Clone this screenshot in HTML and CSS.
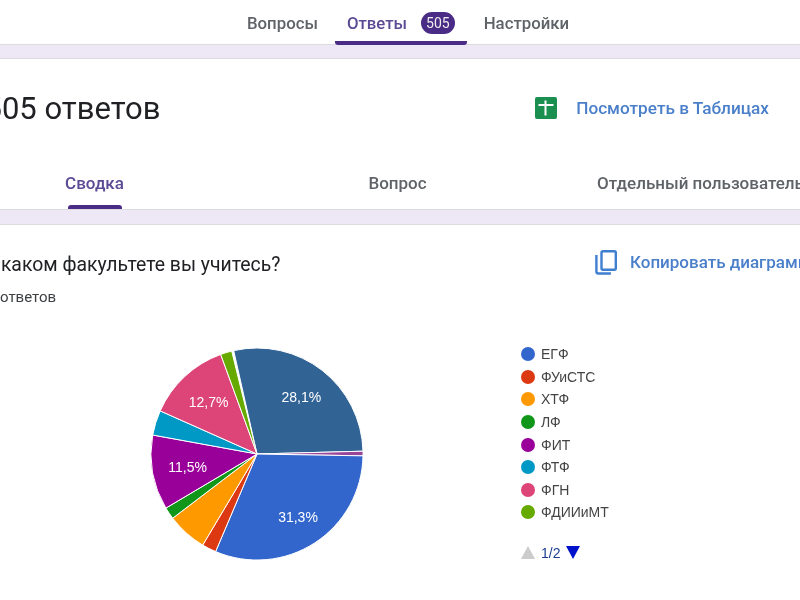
FILE: index.html
```html
<!DOCTYPE html>
<html lang="ru">
<head>
    <meta charset="UTF-8">
    <title>Ответы</title>
    <link rel="stylesheet" href="styles.css">
</head>
<body>

    <nav class="topnav">
        <a class="toptab">Вопросы</a>
        <a class="toptab active">Ответы <span class="badge">505</span></a>
        <a class="toptab">Настройки</a>
    </nav>

    <div class="band band-top"></div>

    <section class="card head-card">
        <div class="head-row">
            <h1 class="title">505 ответов</h1>
            <a class="link sheets-link">
                <svg class="sheets-icon" viewBox="0 0 22 22">
                    <rect width="22" height="22" rx="2" fill="#1a8f50"/>
                    <path d="M3.5 7h15v2h-15zM9.5 3.5h2v15h-2z" fill="#fff"/>
                </svg>
                Посмотреть в Таблицах
            </a>
        </div>
        <div class="subtabs">
            <a class="subtab active"><span>Сводка</span></a>
            <a class="subtab"><span>Вопрос</span></a>
            <a class="subtab"><span>Отдельный пользователь</span></a>
        </div>
    </section>

    <div class="band band-mid"></div>

    <section class="card chart-card">
        <div class="question-row">
            <h2 class="question">В каком факультете вы учитесь?</h2>
            <a class="link copy-link">
                <svg class="copy-icon" viewBox="0 0 22 25" fill="none" stroke="#3f7fd0" stroke-width="2.4">
                    <rect x="6.5" y="1.2" width="14.3" height="18.5" rx="1.5"/>
                    <path d="M1.4 5v16.5a2 2 0 0 0 2 2h12.5"/>
                </svg>
                Копировать диаграмму
            </a>
        </div>
        <p class="count">505 ответов</p>

        <div class="chart">
            <svg class="pie" viewBox="-107 -107 214 214">
                <g stroke="#fff" stroke-width="1">
                    <path d="M0 0L-23.3 -103.4A106 106 0 0 1 106 -2.8Z" fill="#316395"/>
                    <path d="M0 0L106 -2.8A106 106 0 0 1 106 1.85Z" fill="#994499"/>
                    <path d="M0 0L106 1.85A106 106 0 0 1 -41.4 97.6Z" fill="#3366cc"/>
                    <path d="M0 0L-41.4 97.6A106 106 0 0 1 -54.3 91.1Z" fill="#dc3912"/>
                    <path d="M0 0L-54.3 91.1A106 106 0 0 1 -84.3 64.2Z" fill="#ff9900"/>
                    <path d="M0 0L-84.3 64.2A106 106 0 0 1 -91.1 54.1Z" fill="#109618"/>
                    <path d="M0 0L-91.1 54.1A106 106 0 0 1 -104.3 -19Z" fill="#990099"/>
                    <path d="M0 0L-104.3 -19A106 106 0 0 1 -96.8 -43.1Z" fill="#0099c6"/>
                    <path d="M0 0L-96.8 -43.1A106 106 0 0 1 -36.3 -99.6Z" fill="#dd4477"/>
                    <path d="M0 0L-36.3 -99.6A106 106 0 0 1 -25.3 -102.9Z" fill="#66aa00"/>
                </g>
                <g class="pie-labels">
                    <text x="44.3" y="-52">28,1%</text>
                    <text x="41" y="68">31,3%</text>
                    <text x="-48.4" y="-47">12,7%</text>
                    <text x="-69.4" y="18">11,5%</text>
                </g>
            </svg>

            <div class="legend">
                <ul class="legend-list">
                    <li><i class="dot dot-egf"></i>ЕГФ</li>
                    <li><i class="dot dot-fuistc"></i>ФУиСТС</li>
                    <li><i class="dot dot-htf"></i>ХТФ</li>
                    <li><i class="dot dot-lf"></i>ЛФ</li>
                    <li><i class="dot dot-fit"></i>ФИТ</li>
                    <li><i class="dot dot-ftf"></i>ФТФ</li>
                    <li><i class="dot dot-fgn"></i>ФГН</li>
                    <li><i class="dot dot-fdi"></i>ФДИИиМТ</li>
                </ul>
                <div class="pager">
                    <i class="arrow arrow-up"></i>
                    <span>1/2</span>
                    <i class="arrow arrow-down"></i>
                </div>
            </div>
        </div>
    </section>

</body>
</html>
```

FILE: styles.css
```css
html, body {
    height: 100%;
}

body {
    margin: 0;
    overflow: hidden;
    background-color: #fff;
    font-family: Roboto, Arial, sans-serif;
    color: #3c4043;
    filter: blur(0.4px);
}

.topnav {
    display: flex;
    gap: 5px;
    height: 44px;
    padding-left: 235px;
}

.toptab {
    display: flex;
    align-items: center;
    gap: 14px;
    padding: 4px 12px 0;
    margin-bottom: -1px;
    font-size: 16.8px;
    font-weight: 500;
    color: #5f6368;
    border-bottom: 4px solid transparent;
    border-radius: 0 0 2px 2px;
    box-sizing: border-box;
    height: 45px;
}

.toptab.active {
    color: #5b4a94;
    border-bottom-color: #4a2c86;
    border-radius: 3px;
}

.badge {
    padding: 3px 5px;
    border-radius: 12px;
    background-color: #4a2c86;
    color: #eee;
    font-size: 14px;
    font-weight: 400;
}

.band {
    background-color: #ede7f6;
    border-top: 1px solid #dadce0;
    border-bottom: 1px solid #dadce0;
    box-sizing: border-box;
}

.band-top {
    height: 15px;
}

.band-mid {
    height: 16px;
}

.card {
    margin-left: -57px;
    width: 909px;
}

.head-card {
    height: 150px;
}

.head-row {
    display: flex;
    align-items: center;
    justify-content: space-between;
    height: 98px;
    padding-left: 41.5px;
    padding-right: 83px;
}

.title {
    margin: 0;
    font-size: 31px;
    font-weight: 400;
    color: #202124;
}

.link {
    display: flex;
    align-items: center;
    font-size: 17.2px;
    font-weight: 500;
    color: #4a7fc9;
}

.sheets-icon {
    width: 22px;
    height: 22px;
    margin-right: 19px;
}

.subtabs {
    display: grid;
    grid-template-columns: repeat(3, 303px);
    height: 52px;
}

.subtab {
    display: flex;
    justify-content: center;
    padding-top: 16px;
    height: 52px;
    box-sizing: border-box;
    font-size: 17px;
    font-weight: 500;
    color: #5f6368;
}

.subtab.active {
    color: #5b4a94;
    position: relative;
}

.subtab.active::after {
    content: "";
    position: absolute;
    bottom: 0;
    left: 125px;
    width: 54px;
    height: 4px;
    border-radius: 3px 3px 0 0;
    background-color: #4a2c86;
}

.chart-card {
    padding-top: 26px;
    padding-left: 41px;
    box-sizing: border-box;
}

.question-row {
    display: flex;
    align-items: center;
    justify-content: space-between;
    height: 26px;
}

.question {
    margin: 0;
    font-size: 19.4px;
    font-weight: 400;
    color: #202124;
}

.copy-link {
    width: 257px;
    margin-top: -4px;
    font-size: 17px;
    white-space: nowrap;
}

.copy-icon {
    width: 22px;
    height: 25px;
    margin-right: 13px;
}

.count {
    margin: 11px 0 0 -13px;
    font-size: 15px;
    color: #3c4043;
}

.chart {
    display: flex;
    margin-top: 41px;
    padding-left: 166px;
}

.pie {
    width: 214px;
    height: 214px;
}

.pie-labels text {
    fill: #fff;
    font-family: "Liberation Sans", Arial, sans-serif;
    font-size: 14px;
    text-anchor: middle;
}

.legend {
    margin-left: 157px;
    margin-top: -4px;
    font-family: "Liberation Sans", Arial, sans-serif;
    font-size: 14px;
    color: #444;
}

.legend-list {
    margin: 0;
    padding: 0;
    list-style: none;
}

.legend-list li {
    display: flex;
    align-items: center;
    gap: 6px;
    height: 22.6px;
}

.dot {
    width: 14px;
    height: 14px;
    border-radius: 50%;
}

.dot-egf { background-color: #3366cc; }
.dot-fuistc { background-color: #dc3912; }
.dot-htf { background-color: #ff9900; }
.dot-lf { background-color: #109618; }
.dot-fit { background-color: #990099; }
.dot-ftf { background-color: #0099c6; }
.dot-fgn { background-color: #dd4477; }
.dot-fdi { background-color: #66aa00; }

.pager {
    display: flex;
    align-items: center;
    gap: 6px;
    margin-top: 21px;
    color: #1c3f94;
}

.arrow {
    width: 0;
    height: 0;
    border-left: 7px solid transparent;
    border-right: 7px solid transparent;
}

.arrow-up {
    border-bottom: 13px solid #ccc;
}

.arrow-down {
    border-top: 13px solid #0011cc;
}
```
